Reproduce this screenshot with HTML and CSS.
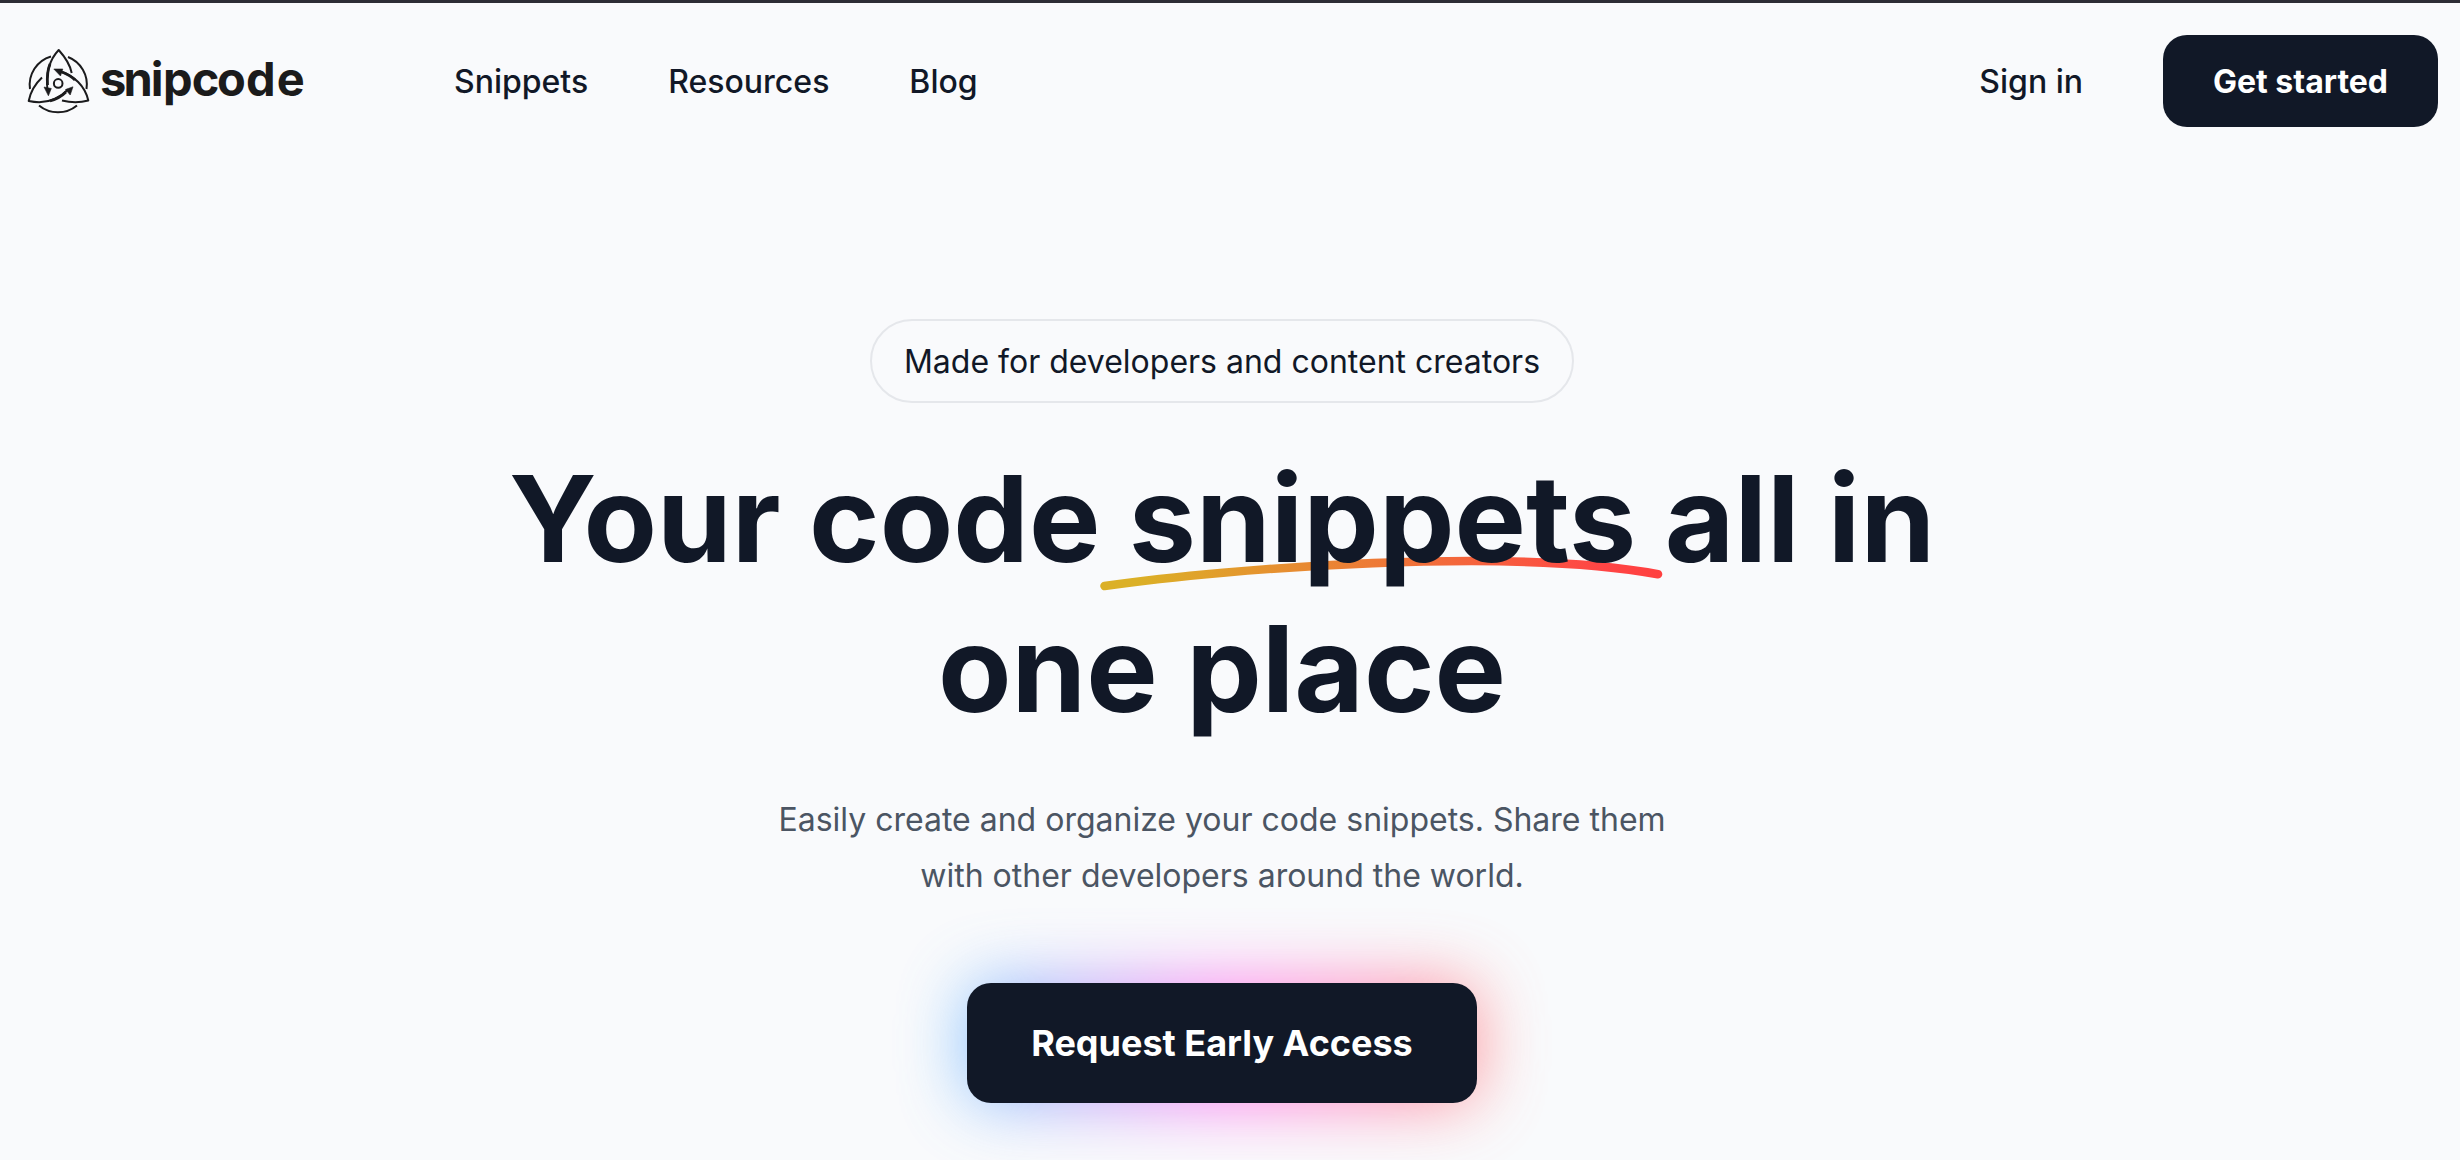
FILE: index.html
```html
<!DOCTYPE html>
<html lang="en">
<head>
<meta charset="utf-8">
<title>Snipcode</title>
<link rel="stylesheet" href="styles.css">
</head>
<body>
<header class="header">
  <a class="logo" aria-label="snipcode">
    <svg class="logo-art" width="284" height="72" viewBox="24 45 284 72">
      <g class="mark">
        <path d="M51 56.500A29.500 29.500 0 0 0 30 89M68 57A29.500 29.500 0 0 1 86.500 89M39 105.500A30 30 0 0 0 77 105.500"/>
        <path d="M47.500 91C45.500 72 50 59 58.700 50C65 57 70 64 71.700 73"/>
        <path d="M60 71.500C74 75.500 85 86 88.300 100.500C79 103 70 102.500 62 100.500"/>
        <path d="M68 89.500C57 101 43 104 28.700 101C30.500 92 35 84 42 77.500"/>
        <path class="heavy" d="M47.500 85C47 77 47.500 70 50 64M62 72C67 74 71 76 75 80M66 92C62 96 57 99 50 101"/>
        <circle cx="58.200" cy="83.400" r="4.300"/>
        <path class="tip" d="M44 87L51.300 88.500L48.400 95.800ZM53.800 69L62.800 69L60.500 76ZM73 86.800L70.200 95L65.500 89.500Z"/>
      </g>
      <text class="wordmark" y="96" x="100 123.500 150.700 163 191.800 217 246 276.700">snipcode</text>
    </svg>
  </a>
  <nav class="nav"><a>Snippets</a><a>Resources</a><a>Blog</a></nav>
  <div class="actions"><a>Sign in</a><a class="start">Get started</a></div>
</header>
<main class="hero">
  <p class="badge">Made for developers and content creators</p>
  <h1 class="title">Your code <span class="mark-word">snippets<svg class="swoosh" width="570" height="44" viewBox="1096 550 570 44"><defs><linearGradient id="warm" gradientUnits="userSpaceOnUse" x1="1104" y1="0" x2="1658" y2="0"><stop offset="0" stop-color="#dbb027"/><stop offset=".06" stop-color="#dbb027"/><stop offset=".9" stop-color="#ff4545"/><stop offset="1" stop-color="#ff4040"/></linearGradient></defs><path d="M1104.500 585C1230 567 1510 546 1658 573.200" fill="none" stroke="url(#warm)" stroke-width="8.600" stroke-linecap="round"/></svg></span> all in<br>one place</h1>
  <p class="lead">Easily create and organize your code snippets. Share them<br>with other developers around the world.</p>
  <div class="cta-wrap"><a class="cta">Request Early Access</a></div>
</main>
</body>
</html>
```
FILE: styles.css
```css
* { box-sizing: border-box; }
html { overflow: hidden; }
body {
  margin: 0;
  height: 1160px;
  overflow: hidden;
  border-top: 3px solid #2d2d35;
  background: #f9fafc;
  color: #111827;
  font-family: Inter, "Liberation Sans", sans-serif;
  font-size: 32px;
}
.header {
  display: flex;
  align-items: center;
  height: 156px;
  padding: 0 22px 0 24px;
}
.logo { display: flex; margin-right: 146px; }
.logo-art { display: block; }
.mark { fill: none; stroke: #1b1b1d; stroke-width: 2; stroke-linejoin: round; }
.mark .heavy { stroke-width: 2.8; }
.mark .tip { fill: #1b1b1d; stroke-width: .6; }
.wordmark { fill: #1b1b1b; font: 700 47px Inter, sans-serif; }
.nav { display: flex; gap: 80px; font-weight: 500; }
.actions { display: flex; align-items: center; gap: 80px; margin-left: auto; font-weight: 500; }
.start {
  width: 275px;
  height: 92px;
  border-radius: 24px;
  background: #111827;
  color: #fff;
  font-weight: 700;
  line-height: 93px;
  text-align: center;
}
.hero {
  display: flex;
  flex-direction: column;
  align-items: center;
  padding: 160px 16px 0 0;
  text-align: center;
}
.badge {
  width: 704px;
  height: 84px;
  margin: 0;
  border: 2px solid #e5e7eb;
  border-radius: 42px;
  line-height: 82px;
}
.title {
  margin: 41px 0 0;
  font-size: 120px;
  font-weight: 700;
  line-height: 150px;
}
.mark-word { position: relative; z-index: 0; }
.swoosh { position: absolute; left: -33px; top: 105px; z-index: -1; }
.lead { margin: 48px 0 0; color: #4b5563; line-height: 56px; }
.cta-wrap { position: relative; z-index: 0; margin-top: 79px; }
.cta-wrap::before {
  content: "";
  position: absolute;
  inset: 0;
  z-index: -1;
  border-radius: 24px;
  background: linear-gradient(90deg, #44b0ff, #ff44ec 50%, #ff675e);
  filter: blur(34px);
  opacity: .68;
}
.cta {
  display: block;
  width: 510px;
  height: 120px;
  border-radius: 24px;
  background: #111827;
  color: #fff;
  font-size: 36px;
  font-weight: 700;
  line-height: 120px;
}
```
